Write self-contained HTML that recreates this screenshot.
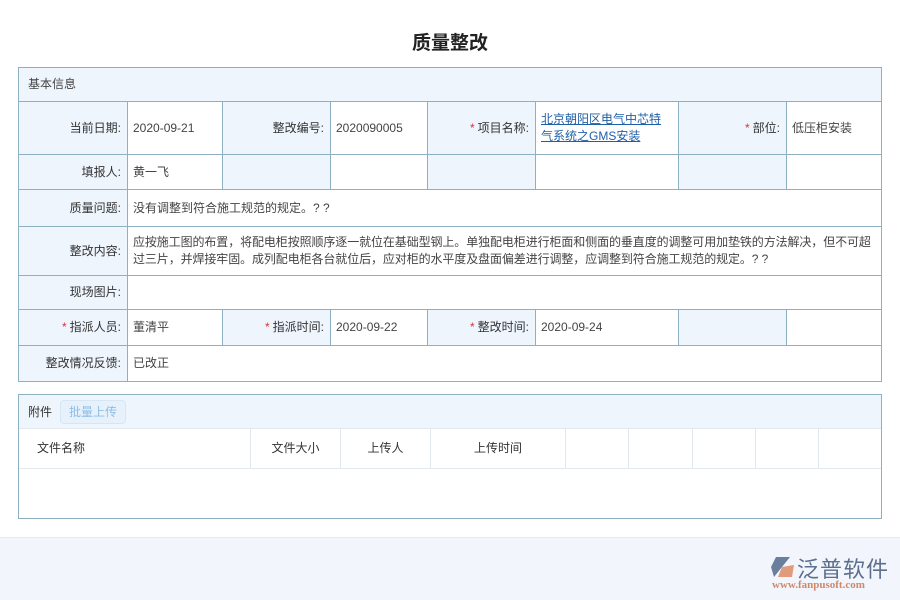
<!DOCTYPE html>
<html><head><meta charset="utf-8"><style>
*{margin:0;padding:0;box-sizing:border-box}
body{width:900px;height:600px;background:#fff;font-family:"Liberation Sans","Noto Sans CJK SC",sans-serif;font-size:12px;color:#333;position:relative;overflow:hidden}
h1{position:absolute;top:28px;left:0;width:900px;text-align:center;font-size:19px;font-weight:bold;color:#222}
table{border-collapse:collapse;table-layout:fixed;position:absolute;left:18px;width:863px}
td{border:1px solid #8db0c2;padding:0 3px 0 5px;vertical-align:middle;line-height:17px;color:#444}
td.l{background:#eef5fd;text-align:right;padding-right:6px;color:#333}
.h{background:#eef5fd;text-align:left;padding-left:9px}
.s{color:#d33;margin-right:3px}
a{color:#1f5fa8;text-decoration:underline}
.att{position:absolute;left:18px;top:394px;width:864px;height:125px;border:1px solid #8db0c2}
.ah{height:34px;background:#eef5fd;border-bottom:1px solid #e3e8ee;padding-left:9px;display:flex;align-items:center}
.btn{margin-left:8px;padding:0 8px;height:24px;line-height:22px;border:1px solid #d6e6f5;border-radius:4px;background:#e6f1fc;color:#8dbde6}
.th{position:absolute;top:34px;height:40px;border-right:1px solid #e3e8ee;border-bottom:1px solid #e3e8ee;line-height:39px;text-align:center}
.foot{position:absolute;left:0;top:537px;width:900px;height:63px;background:#f2f6fc;border-top:1px solid #e6ebf2}
</style></head><body>
<h1>质量整改</h1>
<table style="top:67px">
<colgroup><col style="width:109px"><col style="width:95px"><col style="width:108px"><col style="width:97px"><col style="width:108px"><col style="width:143px"><col style="width:108px"><col style="width:95px"></colgroup>
<tr style="height:34px"><td colspan="8" class="h">基本信息</td></tr>
<tr style="height:53px"><td class="l">当前日期:</td><td>2020-09-21</td><td class="l">整改编号:</td><td>2020090005</td><td class="l"><span class="s">*</span>项目名称:</td><td style="padding-right:16px"><a>北京朝阳区电气中芯特气系统之GMS安装</a></td><td class="l"><span class="s">*</span>部位:</td><td>低压柜安装</td></tr>
<tr style="height:35px"><td class="l">填报人:</td><td>黄一飞</td><td class="l"></td><td></td><td class="l"></td><td></td><td class="l"></td><td></td></tr>
<tr style="height:37px"><td class="l">质量问题:</td><td colspan="7">没有调整到符合施工规范的规定。? ?</td></tr>
<tr style="height:49px"><td class="l">整改内容:</td><td colspan="7" style="padding-right:0;letter-spacing:-0.1px">应按施工图的布置，将配电柜按照顺序逐一就位在基础型钢上。单独配电柜进行柜面和侧面的垂直度的调整可用加垫铁的方法解决，但不可超过三片，并焊接牢固。成列配电柜各台就位后，应对柜的水平度及盘面偏差进行调整，应调整到符合施工规范的规定。? ?</td></tr>
<tr style="height:34px"><td class="l">现场图片:</td><td colspan="7"></td></tr>
<tr style="height:36px"><td class="l"><span class="s">*</span>指派人员:</td><td>董清平</td><td class="l"><span class="s">*</span>指派时间:</td><td>2020-09-22</td><td class="l"><span class="s">*</span>整改时间:</td><td>2020-09-24</td><td class="l"></td><td></td></tr>
<tr style="height:36px"><td class="l">整改情况反馈:</td><td colspan="7">已改正</td></tr>
</table>
<div class="att">
<div class="ah">附件<span class="btn">批量上传</span></div>
<div class="th" style="left:0;width:232px;text-align:left;padding-left:18px">文件名称</div>
<div class="th" style="left:232px;width:90px">文件大小</div>
<div class="th" style="left:322px;width:90px">上传人</div>
<div class="th" style="left:412px;width:135px">上传时间</div>
<div class="th" style="left:547px;width:63px"></div>
<div class="th" style="left:610px;width:64px"></div>
<div class="th" style="left:674px;width:63px"></div>
<div class="th" style="left:737px;width:63px"></div>
<div class="th" style="left:800px;width:62px;border-right:none"></div>
</div>
<div class="foot">
<svg style="position:absolute;left:770px;top:17px" width="26" height="24" viewBox="0 0 26 24"><path d="M6 2 L20 2 L12 12 L4 22 L1 12Z" fill="#6a7f9e"/><path d="M12 12 L24 10 L22 22 L8 22Z" fill="#e19a7c"/></svg>
<div style="position:absolute;left:797px;top:14px;font-size:22px;color:#5c6f8e;letter-spacing:1px">泛普软件</div>
<div style="position:absolute;left:772px;top:41px;font-size:11px;color:#d0876a;font-family:'Liberation Serif',serif;font-weight:bold">www.fanpusoft.com</div>
</div>
</body></html>
